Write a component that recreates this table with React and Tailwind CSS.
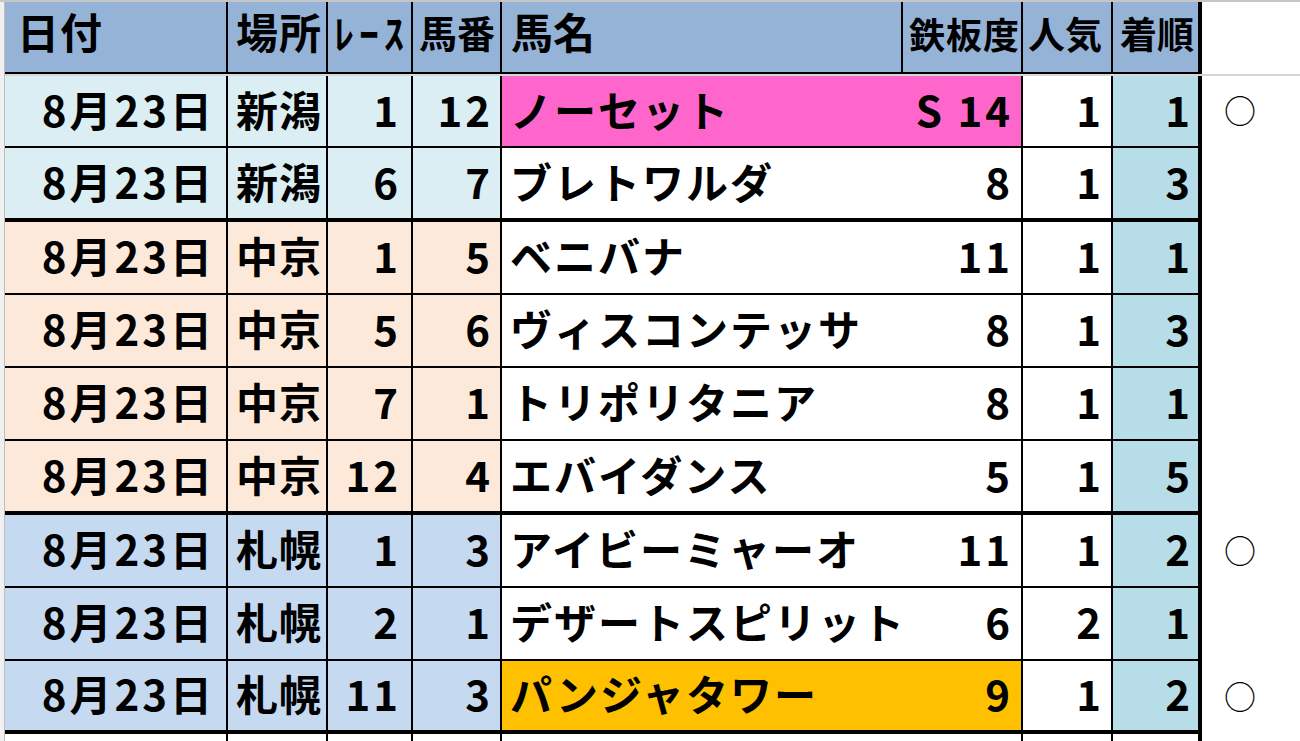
import React from 'react';

const rows = [
  { place: '新潟', race: 1, num: 12, name: 'ノーセット', score: 'S 14', pop: 1, rank: 1, mark: true, bg: 'bg-[#daeef3]', nameBg: 'bg-[#ff66cc]', h: 'h-[72px]', b: 'border-b-2' },
  { place: '新潟', race: 6, num: 7, name: 'ブレトワルダ', score: '8', pop: 1, rank: 3, bg: 'bg-[#daeef3]', h: 'h-[74px]', b: 'border-b-4' },
  { place: '中京', race: 1, num: 5, name: 'ベニバナ', score: '11', pop: 1, rank: 1, bg: 'bg-[#fde9d9]', h: 'h-[73px]', b: 'border-b-2' },
  { place: '中京', race: 5, num: 6, name: 'ヴィスコンテッサ', score: '8', pop: 1, rank: 3, bg: 'bg-[#fde9d9]', h: 'h-[73px]', b: 'border-b-2' },
  { place: '中京', race: 7, num: 1, name: 'トリポリタニア', score: '8', pop: 1, rank: 1, bg: 'bg-[#fde9d9]', h: 'h-[73px]', b: 'border-b-2' },
  { place: '中京', race: 12, num: 4, name: 'エバイダンス', score: '5', pop: 1, rank: 5, bg: 'bg-[#fde9d9]', h: 'h-[74px]', b: 'border-b-4' },
  { place: '札幌', race: 1, num: 3, name: 'アイビーミャーオ', score: '11', pop: 1, rank: 2, mark: true, bg: 'bg-[#c5d9f1]', h: 'h-[73px]', b: 'border-b-2' },
  { place: '札幌', race: 2, num: 1, name: 'デザートスピリット', score: '6', pop: 2, rank: 1, bg: 'bg-[#c5d9f1]', h: 'h-[73px]', b: 'border-b-2' },
  { place: '札幌', race: 11, num: 3, name: 'パンジャタワー', score: '9', pop: 1, rank: 2, mark: true, bg: 'bg-[#c5d9f1]', nameBg: 'bg-[#ffc000]', h: 'h-[73px]', b: 'border-b-4' },
];

const cell = 'flex items-center pb-[5px] border-black whitespace-nowrap';
const head = 'bg-[#95b3d7] border-r-2 border-b-2 border-black whitespace-nowrap';

export default function App() {
  return (
    <div className="w-[1300px] h-[741px] overflow-hidden bg-white text-black font-['Noto_Sans_CJK_JP',sans-serif] font-bold text-[42px] leading-none">
      <div className="h-[2px] bg-[#c6c6c6]" />
      <div className="flex">
        {/* row header gutter */}
        <div className="w-[5px] h-[739px] bg-[#f0f0f0] border-r border-[#bdbdbd]" />

        <div className="flex flex-col w-[1295px]">
          {/* header */}
          <div className="flex h-[72px]">
            <div className={`${head} w-[223px] pl-[12px] pt-[8px] tracking-[1px]`}>日付</div>
            <div className={`${head} w-[100px] pl-[8px] pt-[8px] tracking-[1px]`}>場所</div>
            <div className={`${head} w-[85px] pl-[6px] pt-[10px] text-[40px] tracking-[5px]`}>ﾚｰｽ</div>
            <div className={`${head} w-[89px] pl-[6px] pt-[11px] text-[38px]`}>馬番</div>
            <div className={`${head} w-[401px] pl-[9px] pt-[8px]`}>馬名</div>
            <div className={`${head} w-[120px] pl-[6px] pt-[13px] text-[36px] tracking-[1px]`}>鉄板度</div>
            <div className={`${head} w-[90px] pl-[5px] pt-[13px] text-[37px]`}>人気</div>
            <div className={`${head} w-[89px] pl-[7px] pt-[13px] text-[37px] border-r-4`}>着順</div>
            <div className="w-[98px]" />
          </div>
          <div className="h-[2px] bg-[#d6d6d6]" />

          {rows.map((r, i) => (
            <div key={i} className={`flex ${r.h}`}>
              <div className={`${cell} ${r.bg} ${r.b} w-[223px] border-r-2 justify-end pr-[11px] tracking-[3px]`}>8月23日</div>
              <div className={`${cell} ${r.bg} ${r.b} w-[100px] border-r-2 pl-[8px] tracking-[1px]`}>{r.place}</div>
              <div className={`${cell} ${r.bg} ${r.b} w-[85px] border-r-2 justify-end pr-[10px] tracking-[3px]`}>{r.race}</div>
              <div className={`${cell} ${r.bg} ${r.b} w-[89px] border-r-2 justify-end pr-[7px] tracking-[3px]`}>{r.num}</div>
              <div className={`${cell} ${r.nameBg || 'bg-white'} ${r.b} w-[401px] pl-[8px] tracking-[2px]`}>{r.name}</div>
              <div className={`${cell} ${r.nameBg || 'bg-white'} ${r.b} w-[120px] border-r-2 justify-end pr-[8px] tracking-[3px]`}>{r.score}</div>
              <div className={`${cell} bg-white ${r.b} w-[90px] border-r-2 justify-end pr-[10px]`}>{r.pop}</div>
              <div className={`${cell} bg-[#b7dee8] ${r.b} w-[89px] border-r-4 justify-end pr-[8px]`}>{r.rank}</div>
              <div className="w-[98px] flex items-center pb-[6px] pl-[22px] font-normal text-[32px]">{r.mark ? '○' : ''}</div>
            </div>
          ))}

          {/* next row, cut off */}
          <div className="flex h-[10px]">
            <div className="w-[223px] border-r-2 border-black" />
            <div className="w-[100px] border-r-2 border-black" />
            <div className="w-[85px] border-r-2 border-black" />
            <div className="w-[89px] border-r-2 border-black" />
            <div className="w-[401px]" />
            <div className="w-[120px] border-r-2 border-black" />
            <div className="w-[90px] border-r-2 border-black" />
            <div className="w-[89px] border-r-4 border-black" />
          </div>
        </div>
      </div>
    </div>
  );
}
